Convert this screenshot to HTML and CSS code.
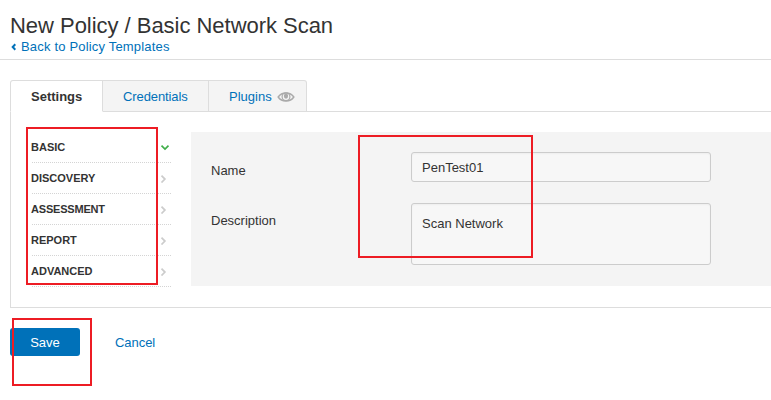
FILE: index.html
```html
<!DOCTYPE html>
<html lang="en">
<head>
<meta charset="utf-8">
<title>New Policy / Basic Network Scan</title>
<link rel="stylesheet" href="styles.css">
</head>
<body>
<header class="header">
  <h1 class="title">New Policy / Basic Network Scan</h1>
  <a class="back"><svg class="back-icon" width="6" height="8" viewBox="0 0 6 8"><path d="M5.3 1.3 2.7 4l2.6 2.7"/></svg><span>Back to Policy Templates</span></a>
</header>
<main class="main">
  <nav class="tabs">
    <a class="tab active">Settings</a>
    <a class="tab credentials">Credentials</a>
    <a class="tab plugins"><span>Plugins</span><svg class="eye" width="18" height="12" viewBox="0 0 18 12"><path class="eye-line" d="M1.2 6C4.8.6 13.2.6 16.8 6 13.2 11.4 4.8 11.4 1.2 6Z"/><circle class="eye-ring" cx="9" cy="5.7" r="3.9"/><ellipse class="eye-pupil" cx="9" cy="5.1" rx="2.1" ry="2.7"/></svg></a>
  </nav>
  <section class="panel">
    <ul class="menu">
      <li class="item"><span>BASIC</span><svg class="chevron open" width="10" height="10" viewBox="0 0 10 10"><path d="M1.5 3.6 5 7l3.5-3.4"/></svg></li>
      <li class="item"><span>DISCOVERY</span><svg class="chevron" width="10" height="10" viewBox="0 0 10 10"><path d="M1.5 2.7 4.9 6.1 1.5 9.5"/></svg></li>
      <li class="item"><span class="wide-word">ASSESSMENT</span><svg class="chevron" width="10" height="10" viewBox="0 0 10 10"><path d="M1.5 2.7 4.9 6.1 1.5 9.5"/></svg></li>
      <li class="item"><span>REPORT</span><svg class="chevron" width="10" height="10" viewBox="0 0 10 10"><path d="M1.5 2.7 4.9 6.1 1.5 9.5"/></svg></li>
      <li class="item"><span>ADVANCED</span><svg class="chevron" width="10" height="10" viewBox="0 0 10 10"><path d="M1.5 2.7 4.9 6.1 1.5 9.5"/></svg></li>
    </ul>
    <form class="form">
      <label class="label" for="name">Name</label>
      <input class="field" id="name" type="text" value="PenTest01">
      <label class="label" for="description">Description</label>
      <textarea class="field area" id="description">Scan Network</textarea>
    </form>
  </section>
  <div class="actions">
    <button class="save" type="button">Save</button>
    <a class="cancel">Cancel</a>
  </div>
</main>
<div class="mark mark-menu"></div>
<div class="mark mark-fields"></div>
<div class="mark mark-save"></div>
</body>
</html>
```
FILE: styles.css
```css
* { box-sizing: border-box; }
body {
  position: relative;
  margin: 0;
  height: 400px;
  overflow: hidden;
  background: #fff;
  color: #333;
  font: 13px/20px "Liberation Sans", Arial, sans-serif;
}
a { color: #0071b9; }
.header {
  height: 60px;
  padding: 12px 10px 0;
  border-bottom: 1px solid #ddd;
}
.title {
  margin: 0;
  font-size: 22px;
  line-height: 28px;
  font-weight: 400;
  letter-spacing: -0.03px;
}
.back {
  display: flex;
  align-items: center;
  gap: 5px;
  line-height: 14px;
  letter-spacing: 0.18px;
}
.back-icon { fill: none; stroke: #0071b9; stroke-width: 2; }
.main { padding: 20px 0 0 10px; }
.tabs {
  position: relative;
  display: flex;
  width: 297px;
  height: 32px;
  margin-bottom: -1px;
}
.tab {
  display: flex;
  align-items: center;
  padding: 2px 20px 0;
  border: 1px solid #ddd;
  border-left: 0;
  background: #f4f4f4;
}
.active {
  width: 93px;
  border-left: 1px solid #ddd;
  border-bottom-color: #fff;
  border-radius: 3px 0 0 0;
  background: #fff;
  color: #333;
  font-weight: 700;
}
.credentials { width: 106px; letter-spacing: -0.1px; }
.plugins { width: 98px; border-radius: 0 3px 0 0; padding-right: 0; }
.eye { margin-left: 5px; flex: none; }
.eye-line { fill: none; stroke: #aaa; stroke-width: 1.5; }
.eye-ring { fill: none; stroke: #aaa; stroke-width: 1.2; }
.eye-pupil { fill: #aaa; }
.panel {
  display: flex;
  gap: 20px;
  height: 197px;
  padding: 20px 0 20px 20px;
  border: solid #ddd;
  border-width: 1px 0 1px 1px;
}
.menu {
  width: 140px;
  margin: 0;
  padding: 0;
  list-style: none;
  font-size: 11px;
  font-weight: 700;
}
.item {
  display: flex;
  align-items: center;
  justify-content: space-between;
  height: 31px;
  padding-bottom: 1px;
  background: repeating-linear-gradient(90deg, transparent 0 1px, #d4d4d4 1px 2px) bottom / 100% 1px no-repeat;
}
.wide-word { letter-spacing: -0.2px; }
.chevron { fill: none; stroke: #ccc; stroke-width: 1.7; margin-right: 1px; }
.open { stroke: #3fae49; }
.form {
  flex: 1;
  display: grid;
  grid-template-columns: 200px 300px;
  grid-template-rows: 30px 62px;
  row-gap: 21px;
  height: 154px;
  padding: 20px 0 0 20px;
  background: #f4f4f4;
}
.label { padding-top: 9px; }
.label:nth-of-type(2) { padding-top: 8px; }
.field {
  width: 300px;
  height: 30px;
  margin: 0;
  padding: 1px 10px 0;
  border: 1px solid #ccc;
  border-radius: 3px;
  background: #f7f7f7;
  box-shadow: inset 0 1px 2px rgba(0, 0, 0, 0.04);
  color: #333;
  font: inherit;
  outline: 0;
}
.area { height: 62px; padding-top: 10px; resize: none; overflow: hidden; }
.actions { display: flex; gap: 35px; margin-top: 20px; }
.save {
  width: 70px;
  height: 28px;
  padding: 2px 0 0;
  border: 0;
  border-radius: 3px;
  background: #0071b9;
  color: #fff;
  font: inherit;
}
.cancel { line-height: 29px; letter-spacing: -0.05px; }
.mark { position: absolute; border: 2px solid #ed1c24; pointer-events: none; }
.mark-menu { left: 26px; top: 127px; width: 132px; height: 158px; }
.mark-fields { left: 358px; top: 135px; width: 175px; height: 123px; }
.mark-save { left: 12px; top: 318px; width: 80px; height: 68px; }
```
